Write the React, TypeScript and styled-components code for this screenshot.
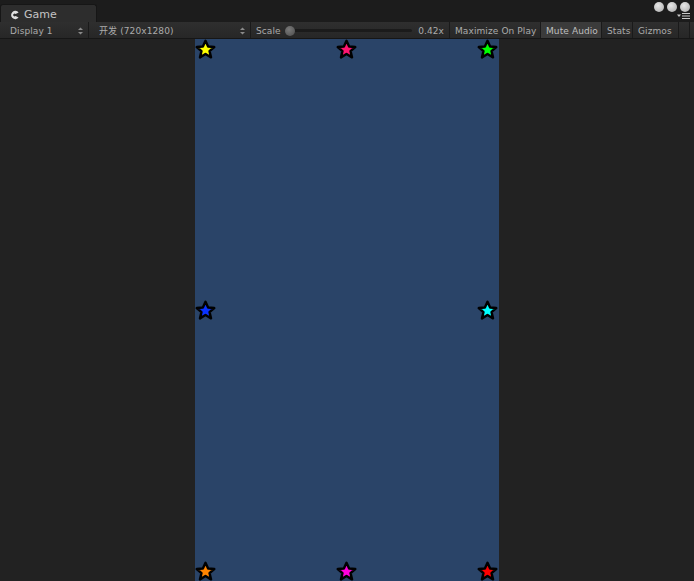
import styled, { createGlobalStyle } from 'styled-components'

const GlobalStyle = createGlobalStyle`
  html, body {
    margin: 0;
    padding: 0;
    height: 100%;
    background: #222222;
    overflow: hidden;
  }
  #root {
    height: 100%;
  }
`

const Window = styled.div`
  display: flex;
  flex-direction: column;
  width: 694px;
  height: 581px;
  font-family: 'DejaVu Sans', 'Noto Sans CJK SC', sans-serif;
  color: #bcbcbc;
`

const TabBar = styled.div`
  height: 22px;
  flex: none;
  display: flex;
  align-items: flex-end;
  justify-content: space-between;
  background: #1c1c1c;
  box-sizing: border-box;
`

const Tab = styled.div`
  width: 97px;
  height: 18px;
  box-sizing: border-box;
  display: flex;
  align-items: center;
  gap: 4px;
  padding: 2px 0 0 9px;
  background: #2d2d2d;
  border: 1px solid #161616;
  border-bottom: none;
  border-radius: 3px 3px 0 0;
  font-size: 11px;
  color: #c4c4c4;
`

const WindowControls = styled.div`
  display: flex;
  flex-direction: column;
  align-items: flex-end;
  align-self: stretch;
  padding: 2px 4px 0 0;
  gap: 1px;
`

const Dots = styled.div`
  display: flex;
  gap: 3px;
`

const Dot = styled.div`
  width: 10px;
  height: 10px;
  border-radius: 50%;
  background: radial-gradient(circle at 40% 35%, #e8e8e8, #a8a8a8);
`

const Toolbar = styled.div`
  height: 16px;
  flex: none;
  display: flex;
  align-items: stretch;
  background: linear-gradient(#2f2f2f, #272727);
  border-bottom: 1px solid #161616;
  font-size: 9px;
  letter-spacing: 0.1px;
`

const Section = styled.div<{ $width: number; $active?: boolean }>`
  width: ${(p) => p.$width}px;
  flex: none;
  box-sizing: border-box;
  display: flex;
  align-items: center;
  padding: 1px 5px 0;
  gap: 6px;
  border-right: 1px solid #1a1a1a;
  background: ${(p) => (p.$active ? '#3b3b3b' : 'transparent')};
  color: ${(p) => (p.$active ? '#bfbfbf' : '#ababab')};
  white-space: nowrap;
  overflow: hidden;
`

const DropLabel = styled.span`
  flex: 1;
  padding-left: 5px;
  overflow: hidden;
`

const SliderTrack = styled.div`
  flex: 1;
  height: 3px;
  background: #1b1b1b;
  border-radius: 2px;
  position: relative;
  display: flex;
  align-items: center;
`

const Knob = styled.div`
  position: absolute;
  left: -2px;
  width: 10px;
  height: 10px;
  border-radius: 50%;
  background: radial-gradient(circle at 40% 35%, #7a7a7a, #4c4c4c);
`

const Content = styled.div`
  flex: 1;
  display: flex;
  justify-content: center;
  background: #222222;
`

const Viewport = styled.div`
  width: 304px;
  background: #2a4468;
  box-sizing: border-box;
  padding: 0 1px 0 0;
  display: flex;
  flex-direction: column;
  justify-content: space-between;
  margin-bottom: -1px;
`

const StarRow = styled.div`
  display: flex;
  justify-content: space-between;
  height: 21px;
`

const Slot = styled.div`
  width: 21px;
  height: 21px;
`

const GameIcon = () => (
  <svg width="10" height="10" viewBox="0 0 10 10">
    <path d="M8.6 2.4 A4.2 4.2 0 1 0 8.6 7.6 L5.6 6 A1.4 1.4 0 1 1 5.6 4 Z" fill="#e0e0e0" />
  </svg>
)

const UpDown = () => (
  <svg width="5" height="8" viewBox="0 0 5 8" style={{ flex: 'none' }}>
    <path d="M0 3 L5 3 L2.5 0.5 Z" fill="#8a8a8a" />
    <path d="M0 5 L5 5 L2.5 7.5 Z" fill="#8a8a8a" />
  </svg>
)

const Down = () => (
  <svg width="5" height="4" viewBox="0 0 5 4">
    <path d="M0 0.5 L5 0.5 L2.5 3.5 Z" fill="#8a8a8a" />
  </svg>
)

const MenuIcon = () => (
  <svg width="13" height="6" viewBox="0 0 13 6">
    <path d="M0 1.5 L4 1.5 L2 4 Z" fill="#c8c8c8" />
    <rect x="5" y="0" width="8" height="1" fill="#c8c8c8" />
    <rect x="5" y="2.5" width="8" height="1" fill="#c8c8c8" />
    <rect x="5" y="5" width="8" height="1" fill="#c8c8c8" />
  </svg>
)

const Star = ({ color }: { color: string }) => (
  <svg width="21" height="21" viewBox="0 0 24 24">
    <polygon
      points="12,2 15,8.5 22,9.2 16.6,13.8 18.3,21 12,17.2 5.7,21 7.4,13.8 2,9.2 9,8.5"
      fill={color}
      stroke="#000"
      strokeWidth="2.8"
      strokeLinejoin="round"
    />
  </svg>
)

const rows: (string | null)[][] = [
  ['#ffff00', '#ff1470', '#00ff00'],
  ['#0a32ff', null, '#00ffff'],
  ['#ff8400', '#ff00dc', '#ff0000'],
]

export default function App() {
  return (
    <>
      <GlobalStyle />
      <Window>
        <TabBar>
          <Tab>
            <GameIcon />
            <span>Game</span>
          </Tab>
          <WindowControls>
            <Dots>
              <Dot />
              <Dot />
              <Dot />
            </Dots>
            <MenuIcon />
          </WindowControls>
        </TabBar>
        <Toolbar>
          <Section $width={89}>
            <DropLabel>Display 1</DropLabel>
            <UpDown />
          </Section>
          <Section $width={162}>
            <DropLabel>开发 (720x1280)</DropLabel>
            <UpDown />
          </Section>
          <Section $width={199}>
            <span>Scale</span>
            <SliderTrack>
              <Knob />
            </SliderTrack>
            <span>0.42x</span>
          </Section>
          <Section $width={91}>Maximize On Play</Section>
          <Section $width={61} $active>
            Mute Audio
          </Section>
          <Section $width={31}>Stats</Section>
          <Section $width={46}>Gizmos</Section>
          <Section $width={11}>
            <Down />
          </Section>
        </Toolbar>
        <Content>
          <Viewport>
            {rows.map((row, i) => (
              <StarRow key={i}>
                {row.map((c, j) => (
                  <Slot key={j}>{c && <Star color={c} />}</Slot>
                ))}
              </StarRow>
            ))}
          </Viewport>
        </Content>
      </Window>
    </>
  )
}
